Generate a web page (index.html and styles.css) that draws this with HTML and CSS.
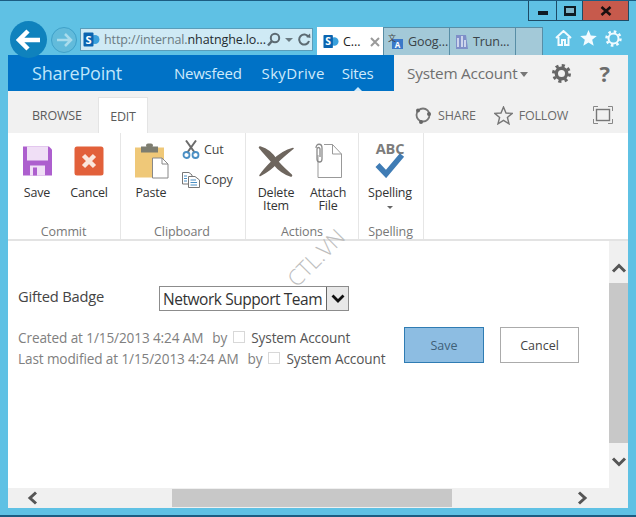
FILE: index.html
```html
<!DOCTYPE html>
<html lang="en">
<head>
<meta charset="utf-8">
<title>SharePoint</title>
<link rel="stylesheet" href="styles.css">
</head>
<body>
<div class="window">
  <div class="titlebar">
    <div class="winbtn min"><span class="min-glyph"></span></div>
    <div class="winbtn max"><span class="max-glyph"></span></div>
    <div class="winbtn close"><svg width="14" height="10" viewBox="0 0 14 10"><path d="M2.500 1 L11.500 9 M11.500 1 L2.500 9" stroke="#1a1010" stroke-width="2.600"/></svg></div>
  </div>
  <div class="chrome">
    <div class="back"><svg width="26" height="24" viewBox="0 0 26 24"><path d="M12 3 L3 12 L12 21 M4 12 H24" fill="none" stroke="#fff" stroke-width="4.500"/></svg></div>
    <div class="forward"><svg width="18" height="16" viewBox="0 0 18 16"><path d="M10 2 L16 8 L10 14 M16 8 H2" fill="none" stroke="#a9dcec" stroke-width="2.500"/></svg></div>
    <div class="address">
      <svg class="sp" width="17" height="17" viewBox="0 0 17 17"><circle cx="12" cy="8.500" r="4.500" fill="#3aa0dc"/><rect x="0.500" y="1.500" width="10" height="14" rx="1" fill="#0a64b0"/><text x="5.500" y="12.500" class="sp-s">S</text></svg>
      <span class="url"><span class="url-dim">http://internal.</span><span class="url-host">nhatnghe.lo...</span></span>
      <svg class="addr-icon" width="15" height="15" viewBox="0 0 15 15"><circle cx="9" cy="6" r="4.200" fill="none" stroke="#5c6a72" stroke-width="2"/><path d="M6 9 L2 13.500" stroke="#5c6a72" stroke-width="2.500"/></svg>
      <span class="addr-caret"></span>
      <svg class="addr-icon" width="13" height="13" viewBox="0 0 13 13"><path d="M10.500 4 A5 5 0 1 0 11 8" fill="none" stroke="#5c6a72" stroke-width="2"/><path d="M8 4 L12.500 5 L12 0.500 Z" fill="#5c6a72"/></svg>
    </div>
    <div class="tabs">
      <div class="tab active">
        <svg width="16" height="17" viewBox="0 0 17 17"><circle cx="12" cy="8.500" r="4.500" fill="#3aa0dc"/><rect x="0.500" y="1.500" width="10" height="14" rx="1" fill="#0a64b0"/><text x="5.500" y="12.500" class="sp-s">S</text></svg>
        <span class="tab-text">C...</span>
        <svg class="tab-x" width="10" height="10" viewBox="0 0 10 10"><path d="M1 1 L9 9 M9 1 L1 9" stroke="#9a9a9a" stroke-width="2"/></svg>
      </div>
      <div class="tab">
        <svg width="16" height="17" viewBox="0 0 16 17"><rect x="4" y="6" width="11" height="10" fill="#3b78c8"/><text x="9.500" y="14.500" class="tr-a">A</text><text x="0" y="8" class="tr-z">文</text></svg>
        <span class="tab-text">Goog...</span>
      </div>
      <div class="tab">
        <svg width="15" height="17" viewBox="0 0 15 17"><path d="M2 2 H12 L14 16 H2 Z" fill="#7f8fc8"/><path d="M4 14 V5 M8 14 V3 M11 14 V7" stroke="#e8ecf8" stroke-width="1.500"/></svg>
        <span class="tab-text">Trun...</span>
      </div>
      <div class="tab blank"></div>
    </div>
    <div class="tools">
      <svg width="17" height="16" viewBox="0 0 17 16"><path d="M1 8 L8.500 1 L16 8 M3.500 7 V15 H7 V10 H10 V15 H13.500 V7" fill="none" stroke="#f2fbff" stroke-width="2"/></svg>
      <svg width="17" height="16" viewBox="0 0 17 16"><path d="M8.500 0 L10.800 5.500 L16.800 6 L12.200 9.800 L13.700 15.800 L8.500 12.600 L3.300 15.800 L4.800 9.800 L0.200 6 L6.200 5.500 Z" fill="#f2fbff"/></svg>
      <svg width="17" height="17" viewBox="0 0 17 17"><circle cx="8.500" cy="8.500" r="5" fill="none" stroke="#f2fbff" stroke-width="2"/><circle cx="8.500" cy="8.500" r="7" fill="none" stroke="#f2fbff" stroke-width="2.500" stroke-dasharray="2.600 2.900"/></svg>
    </div>
  </div>

  <div class="page">
    <div class="suite">
      <div class="suite-blue">
        <span class="brand">SharePoint</span>
        <nav class="suite-nav">
          <span>Newsfeed</span>
          <span class="skydrive">SkyDrive</span>
          <span class="current">Sites</span>
        </nav>
      </div>
      <div class="suite-right">
        <span class="account">System Account</span>
        <span class="account-caret"></span>
        <svg class="suite-gear" width="19" height="19" viewBox="0 0 19 19"><circle cx="9.500" cy="9.500" r="5.200" fill="none" stroke="#666" stroke-width="3.400"/><circle cx="9.500" cy="9.500" r="8" fill="none" stroke="#666" stroke-width="3" stroke-dasharray="3.100 3.180"/></svg>
        <span class="help">?</span>
      </div>
    </div>

    <div class="tabrow">
      <span class="rtab">BROWSE</span>
      <span class="rtab selected">EDIT</span>
      <div class="actions">
        <span class="action share">
          <svg width="18" height="18" viewBox="0 0 18 18"><circle cx="9" cy="9" r="6.500" fill="none" stroke="#777" stroke-width="1.800"/><circle cx="4" cy="4.500" r="2" fill="#666"/><circle cx="15" cy="8" r="2" fill="#666"/><circle cx="7" cy="16" r="2" fill="#666"/></svg>
          SHARE
        </span>
        <span class="action follow">
          <svg width="19" height="19" viewBox="0 0 19 19"><path d="M9.500 1 L12 7 L18.200 7.400 L13.400 11.400 L15 17.800 L9.500 14.400 L4 17.800 L5.600 11.400 L0.800 7.400 L7 7 Z" fill="none" stroke="#777" stroke-width="1.400"/></svg>
          FOLLOW
        </span>
        <svg class="focus" width="20" height="18" viewBox="0 0 20 18"><rect x="3.500" y="3.500" width="13" height="11" fill="none" stroke="#777" stroke-width="1.400"/><path d="M0.500 5 V0.500 H5 M15 0.500 H19.500 V5 M19.500 13 V17.500 H15 M5 17.500 H0.500 V13" fill="none" stroke="#888" stroke-width="1"/></svg>
      </div>
    </div>

    <div class="ribbon">
      <section class="group commit">
        <div class="group-body">
          <div class="big">
            <svg width="31" height="31" viewBox="0 0 31 31"><path d="M1 1 H27 L30 4 V30 H1 Z" fill="#ad5fce"/><rect x="5" y="1" width="21" height="14" fill="#f0dff6"/><rect x="8" y="20" width="15" height="10" fill="#f0dff6"/><rect x="11" y="22" width="4" height="8" fill="#ad5fce"/></svg>
            <span class="big-label">Save</span>
          </div>
          <div class="big">
            <svg width="30" height="30" viewBox="0 0 30 30"><rect x="0.500" y="0.500" width="29" height="29" rx="2.500" fill="#e2603a"/><path d="M9.500 9.500 L20.500 20.500 M20.500 9.500 L9.500 20.500" stroke="#fbe6dc" stroke-width="4.500"/></svg>
            <span class="big-label">Cancel</span>
          </div>
        </div>
        <div class="group-name">Commit</div>
      </section>
      <section class="group clipboard">
        <div class="group-body">
          <div class="big">
            <svg width="35" height="35" viewBox="0 0 35 35"><rect x="1" y="4" width="29" height="30" fill="#efc878"/><rect x="7" y="3" width="17" height="6" fill="#7d7d70"/><rect x="12" y="0" width="7" height="4" rx="2" fill="#7d7d70"/><path d="M18.500 14.500 H28 L34 20.500 V34.500 H18.500 Z" fill="#fff" stroke="#888" stroke-width="1"/><path d="M28 14.500 V20.500 H34" fill="none" stroke="#888" stroke-width="1"/></svg>
            <span class="big-label">Paste</span>
          </div>
          <div class="small-col">
            <div class="small">
              <svg width="18" height="19" viewBox="0 0 18 19"><path d="M4 0.500 L13 13 M14 0.500 L5 13" stroke="#6b6b6b" stroke-width="2"/><circle cx="4.500" cy="15" r="3" fill="none" stroke="#4a8fc4" stroke-width="1.800"/><circle cx="13.500" cy="15" r="3" fill="none" stroke="#4a8fc4" stroke-width="1.800"/></svg>
              <span>Cut</span>
            </div>
            <div class="small">
              <svg width="18" height="16" viewBox="0 0 18 16"><path d="M0.500 0.500 H7 L10 3 V12 H0.500 Z" fill="#fff" stroke="#777"/><path d="M6.500 4.500 H13 L17.500 8 V15.500 H6.500 Z" fill="#fff" stroke="#777"/><path d="M8.500 8 H14 M8.500 10.500 H15 M8.500 13 H15 M2 4 H5 M2 6.500 H5 M2 9 H5" stroke="#4a8fc4"/></svg>
              <span>Copy</span>
            </div>
          </div>
        </div>
        <div class="group-name">Clipboard</div>
      </section>
      <section class="group actions-group">
        <div class="group-body">
          <div class="big">
            <svg width="36" height="33" viewBox="0 0 36 33"><path d="M2 3 C10 5 16 12 19 17 C23 22 29 27 33 31 C26 29 20 24 16 19 C10 12 6 8 2 3 Z" fill="#6e665e" stroke="#6e665e" stroke-width="2.500" stroke-linejoin="round"/><path d="M35 4 C27 6 20 11 15 16 C10 21 5 26 2 31 C8 28 14 24 19 18 C24 13 30 8 35 4 Z" fill="#6e665e" stroke="#6e665e" stroke-width="1.500" stroke-linejoin="round"/></svg>
            <span class="big-label">Delete<br>Item</span>
          </div>
          <div class="big">
            <svg width="30" height="36" viewBox="0 0 30 36"><path d="M5 12 V34.500 H28.500 V11 L19.500 1.500 H11" fill="#fff" stroke="#999" stroke-width="1"/><path d="M19.500 1.500 V11 H28.500" fill="none" stroke="#999"/><path d="M3 5 C3 0 9 0 9 5 V16 C9 20 4 20 4 16 V6 C4 4 7 4 7 6 V14" fill="none" stroke="#8a8a8a" stroke-width="1.300"/></svg>
            <span class="big-label">Attach<br>File</span>
          </div>
        </div>
        <div class="group-name">Actions</div>
      </section>
      <section class="group spelling">
        <div class="group-body">
          <div class="big">
            <svg class="abc" width="32" height="40" viewBox="0 -5 32 40"><text x="16" y="11" class="abc-text">ABC</text><path d="M3.500 22 L12 31 L28 12" fill="none" stroke="#3f7cb5" stroke-width="5.500"/></svg>
            <span class="big-label">Spelling</span>
            <span class="spell-caret"></span>
          </div>
        </div>
        <div class="group-name">Spelling</div>
      </section>
    </div>

    <div class="viewport">
      <main class="form">
        <span class="watermark">CTL.VN</span>
        <div class="field">
          <label class="field-label">Gifted Badge</label>
          <div class="select">
            <span class="select-text">Network Support Team</span>
            <span class="select-arrow"><svg width="14" height="9" viewBox="0 0 14 9"><path d="M1.500 1.500 L7 7 L12.500 1.500" fill="none" stroke="#111" stroke-width="2.800"/></svg></span>
          </div>
        </div>
        <div class="footer">
          <div class="meta">
            <div class="meta-line">Created at 1/15/2013 4:24 AM<span class="by">by</span><span class="box"></span><span class="who">System Account</span></div>
            <div class="meta-line">Last modified at 1/15/2013 4:24 AM<span class="by">by</span><span class="box"></span><span class="who">System Account</span></div>
          </div>
          <div class="buttons">
            <button class="btn primary">Save</button>
            <button class="btn">Cancel</button>
          </div>
        </div>
      </main>
      <div class="vscroll">
        <svg width="16" height="10" viewBox="0 0 16 10"><path d="M2 8.500 L8 2.500 L14 8.500" fill="none" stroke="#555" stroke-width="3"/></svg>
        <div class="vthumb"></div>
        <svg width="16" height="10" viewBox="0 0 16 10"><path d="M2 1.500 L8 7.500 L14 1.500" fill="none" stroke="#555" stroke-width="3"/></svg>
      </div>
    </div>
    <div class="hscroll">
      <svg width="11" height="14" viewBox="0 0 11 14"><path d="M9 1.500 L3 7 L9 12.500" fill="none" stroke="#555" stroke-width="3"/></svg>
      <div class="hthumb"></div>
      <svg width="11" height="14" viewBox="0 0 11 14"><path d="M2 1.500 L8 7 L2 12.500" fill="none" stroke="#555" stroke-width="3"/></svg>
    </div>
  </div>
</div>
</body>
</html>
```

FILE: styles.css
```css
* { box-sizing: border-box; }
html, body { margin: 0; padding: 0; }
body { background: #5fc1e4; font-family: "Open Sans", "Liberation Sans", sans-serif; overflow: hidden; }
.window { width: 636px; height: 517px; background: #5fc1e4; border: 1px solid #1c5d82; border-width: 1px 0 2px 0; display: flex; flex-direction: column; }

.titlebar { height: 20px; display: flex; justify-content: flex-end; padding-right: 7px; flex: none; }
.winbtn { height: 20px; border: 1px solid #1d4b66; border-top: 0; margin-left: -1px; display: flex; align-items: center; justify-content: center; }
.min { width: 29px; }
.max { width: 27px; }
.close { width: 47px; background: #c75a4c; }
.min-glyph { width: 10px; height: 4px; background: #0f1b24; margin-top: 5px; }
.max-glyph { width: 12px; height: 10px; border: 3px solid #0f1b24; border-width: 2px 2px 3px; background: #7fb5c9; }

.chrome { height: 34px; display: flex; align-items: flex-start; flex: none; position: relative; z-index: 1; padding-left: 10px; }
.back { width: 37px; height: 37px; border-radius: 50%; background: #0f82bd; display: flex; align-items: center; justify-content: center; flex: none; margin-top: 0; }
.forward { width: 26px; height: 26px; border-radius: 50%; background: #62bbdb; border: 1px solid #3fa1c9; display: flex; align-items: center; justify-content: center; flex: none; margin: 6px 0 0 4px; }
.address { width: 233px; height: 23px; margin: 7px 0 0 3px; background: #cfeaf5; border: 1px solid #5a9dba; display: flex; align-items: center; padding-left: 2px; flex: none; }
.sp { flex: none; }
.sp-s { font: bold 11px "Open Sans", sans-serif; fill: #fff; text-anchor: middle; }
.url { font-size: 12.500px; margin-left: 4px; white-space: nowrap; width: 161px; flex: none; letter-spacing: -0.100px; }
.url-dim { color: #6a7a82; }
.url-host { color: #1f2a30; }
.addr-icon { flex: none; margin-left: 1px; }
.addr-caret { width: 0; height: 0; border: 4px solid transparent; border-top: 4px solid #6a7a82; border-bottom: 0; margin: 0 4px 0 4px; }

.tabs { display: flex; margin: 6px 0 0 4px; height: 28px; flex: none; }
.tab { width: 67px; height: 28px; background: #a3c9d8; border: 1px solid #588ea6; border-bottom: 0; margin-left: -1px; display: flex; align-items: center; gap: 4px; padding-left: 4px; font-size: 12.500px; color: #3a4348; }
.tab.active { background: #fff; border-color: #fff; margin-left: 0; padding-left: 5px; color: #222; width: 67px; }
.tab-x { margin-left: 6px; }
.tab.blank { width: 28px; }
.tab-text { white-space: nowrap; letter-spacing: -0.100px; }
.tr-a { font: bold 8px "Open Sans", sans-serif; fill: #fff; text-anchor: middle; }
.tr-z { font: 8px "Noto Sans CJK SC", sans-serif; fill: #444; }
.tools { display: flex; align-items: center; gap: 8px; margin: 6px 0 0 12px; height: 22px; }

.page { margin: 0 8px; width: 620px; height: 453px; background: #fff; display: flex; flex-direction: column; flex: none; }
.suite { height: 36px; display: flex; flex: none; }
.suite-blue { width: 386px; background: #0072c6; display: flex; align-items: center; color: #cfeafb; flex: none; }
.brand { font-size: 18px; margin-left: 24px; width: 142px; color: #bfe5fa; letter-spacing: -0.200px; }
.suite-nav { display: flex; gap: 19px; font-size: 15px; letter-spacing: -0.250px; }
.suite-nav .skydrive { letter-spacing: 0.350px; margin-left: 1px; }
.suite-nav .current { position: relative; margin-left: -2px; }
.suite-nav .current::after { content: ""; position: absolute; left: 50%; margin-left: -4px; bottom: -8px; border: 4px solid transparent; border-bottom-color: #cfeafb; border-top: 0; }
.suite-right { flex: 1; background: #f1f1f1; display: flex; align-items: center; color: #6f6f6f; }
.account { font-size: 15.300px; margin-left: 13px; letter-spacing: -0.200px; white-space: nowrap; }
.account-caret { width: 0; height: 0; border: 4px solid transparent; border-top: 5px solid #777; border-bottom: 0; margin: 2px 0 0 3px; }
.suite-gear { margin-left: 24px; }
.help { font-size: 22px; font-weight: 700; color: #6c6c6c; margin-left: 28px; }

.tabrow { height: 42px; background: #f1f1f1; display: flex; align-items: flex-end; flex: none; font-size: 12.500px; color: #5c5c5c; }
.rtab { height: 36px; display: flex; align-items: center; padding-top: 1px; letter-spacing: -0.200px; }
.rtab:first-child { width: 90px; padding-left: 24px; }
.rtab.selected { width: 50px; justify-content: center; background: #fff; border: 1px solid #e4e4e4; border-bottom: 0; }
.actions { margin-left: auto; display: flex; align-items: center; height: 36px; padding-right: 15px; color: #6a6a6a; }
.action { display: flex; align-items: center; gap: 6px; letter-spacing: -0.200px; }
.follow { margin-left: 18px; }
.focus { margin-left: 25px; }

.ribbon { height: 108px; display: flex; border-bottom: 2px solid #e3e3e3; flex: none; background: #fff; }
.group { display: flex; flex-direction: column; border-right: 1px solid #e6e6e6; height: 106px; flex: none; }
.group-body { height: 90px; display: flex; padding-top: 10px; flex: none; }
.group-name { text-align: center; font-size: 12.500px; color: #777; letter-spacing: -0.100px; }
.commit { width: 113px; padding-left: 3px; }
.commit .group-name { padding-right: 4px; }
.clipboard { width: 125px; padding-left: 4px; }
.clipboard .group-name { padding-right: 6px; }
.actions-group { width: 113px; padding-left: 4px; }
.actions-group .group-name { padding-right: 4px; }
.spelling { width: 65px; padding-left: 5px; }
.spelling .group-name { padding-right: 6px; }
.big { width: 52px; display: flex; flex-direction: column; align-items: center; color: #333; font-size: 12.500px; position: relative; letter-spacing: -0.200px; }
.big svg { height: 36px; flex: none; margin-bottom: 7px; }
.big .abc { height: 40px; margin-top: -5px; margin-bottom: 8px; }
.big-label { text-align: center; line-height: 13px; }
.spell-caret { width: 0; height: 0; border: 3px solid transparent; border-top: 3px solid #666; border-bottom: 0; margin-top: 7px; }
.abc-text { font: bold 14.500px "Open Sans", sans-serif; fill: #7c7c7c; text-anchor: middle; }
.small-col { margin-left: 5px; display: flex; flex-direction: column; gap: 11px; margin-top: -3px; }
.small { display: flex; align-items: center; gap: 4px; color: #444; font-size: 12.500px; height: 19px; letter-spacing: -0.200px; }

.viewport { flex: 1; display: flex; min-height: 0; }
.form { flex: 1; position: relative; padding: 45px 0 0 10px; }
.watermark { position: absolute; left: 272px; top: 1px; font-size: 22px; color: #bdbdbd; transform: rotate(-45deg); white-space: nowrap; font-weight: 300; }
.field { display: flex; align-items: center; height: 25px; }
.field-label { width: 141px; font-size: 14.700px; color: #444; letter-spacing: -0.200px; position: relative; top: -3px; }
.select { width: 190px; height: 25px; border: 1px solid #8c8c8c; display: flex; align-items: center; padding-left: 3px; background: #fff; }
.select-text { font-size: 15.500px; color: #333; flex: 1; white-space: nowrap; letter-spacing: -0.450px; }
.select-arrow { width: 22px; height: 23px; background: #e8e8e8; border-left: 1px solid #666; display: flex; align-items: center; justify-content: center; }
.footer { display: flex; margin-top: 16px; }
.meta { width: 386px; }
.meta-line { height: 21px; line-height: 19px; font-size: 13.600px; color: #808080; white-space: nowrap; display: flex; align-items: center; letter-spacing: -0.120px; }
.by { margin-left: 9px; }
.box { width: 12px; height: 12px; border: 1px solid #d8d8d8; margin: -2px 6px 0 6px; }
.who { color: #555; }
.buttons { display: flex; gap: 16px; }
.btn { width: 80px; height: 36px; border: 1px solid #ababab; background: #fff; font: 12.500px "Open Sans", sans-serif; color: #444; padding: 1px 0 0; }
.btn.primary { background: #8dbde2; border-color: #2f7cb3; color: #3f6078; }
.btn:last-child { width: 79px; }

.vscroll { width: 19px; background: #f0f0f0; display: flex; flex-direction: column; align-items: center; justify-content: space-between; padding: 22px 0 21px; position: relative; }
.vthumb { position: absolute; left: 0; top: 42px; width: 19px; height: 160px; background: #c8c8c8; }
.hscroll { height: 20px; background: #f0f0f0; display: flex; align-items: center; justify-content: space-between; padding: 0 40px 0 19px; position: relative; flex: none; }
.hthumb { position: absolute; left: 164px; top: 1px; width: 280px; height: 18px; background: #c8c8c8; }
```
